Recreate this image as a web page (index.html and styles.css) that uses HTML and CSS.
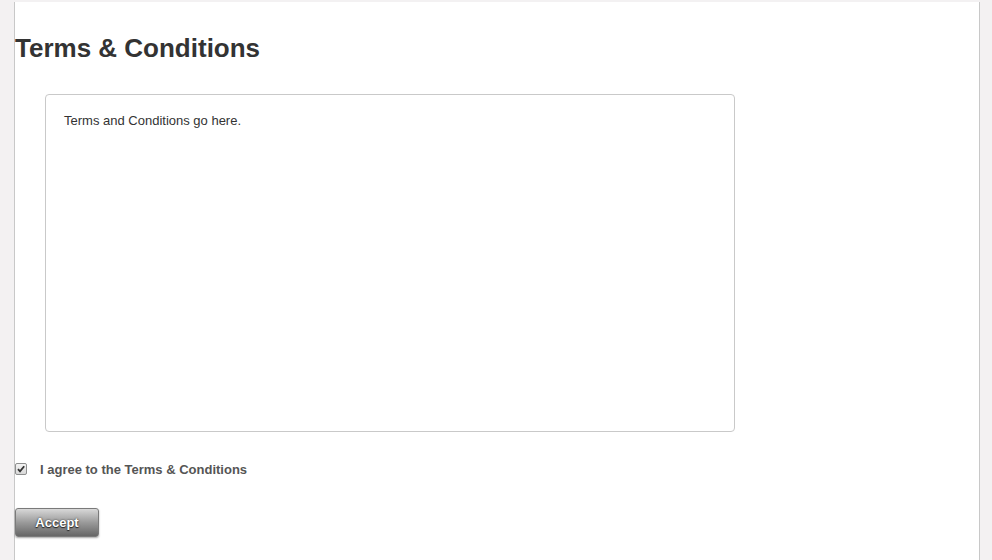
FILE: index.html
```html
<!DOCTYPE html>
<html>
<head>
<meta charset="utf-8">
<title>Terms &amp; Conditions</title>
<link rel="stylesheet" href="styles.css">
</head>
<body>
<div class="page">
  <h1 class="title">Terms &amp; Conditions</h1>
  <div class="terms-box">Terms and Conditions go here.</div>
  <label class="agree">
    <input type="checkbox" class="agree-check" checked>
    <span class="agree-text">I agree to the Terms &amp; Conditions</span>
  </label>
  <button class="accept-btn" type="button">Accept</button>
</div>
</body>
</html>
```

FILE: styles.css
```css
html, body {
  margin: 0;
  padding: 0;
  height: 100%;
}
body {
  background: #f3f1f2;
  font-family: "Liberation Sans", Arial, sans-serif;
  color: #333;
  padding-top: 2px;
  box-sizing: border-box;
  overflow: hidden;
}
.page {
  margin-left: 14px;
  width: 966px;
  height: 100%;
  background: #fff;
  border-left: 1px solid #c8c8c8;
  border-right: 1px solid #c8c8c8;
  padding-top: 31px;
  box-sizing: border-box;
}
.title {
  margin: 0;
  font-size: 26px;
  line-height: 30px;
  font-weight: bold;
  color: #333;
}
.terms-box {
  margin: 31px 0 0 30px;
  width: 670px;
  height: 318px;
  padding: 18px 0 0 18px;
  border: 1px solid #c9c9c9;
  border-radius: 4px;
  font-size: 13px;
  line-height: 16px;
  color: #333;
}
.agree {
  display: flex;
  align-items: center;
  margin-top: 29px;
  height: 16px;
}
.agree-check {
  -webkit-appearance: none;
  appearance: none;
  margin: 0;
  width: 12px;
  height: 12px;
  border: 1px solid #8e8f8f;
  border-radius: 2px;
  background-color: #e6e6e6;
  background-image: url("data:image/svg+xml;utf8,<svg xmlns='http://www.w3.org/2000/svg' width='10' height='10' viewBox='0 0 10 10'><path d='M2 5.2 L4 7.4 L8.2 2.2' fill='none' stroke='%23333' stroke-width='1.8'/></svg>"), linear-gradient(#f4f4f4, #d8d8d8);
  background-repeat: no-repeat;
  background-position: center, 0 0;
  box-sizing: border-box;
}
.agree-text {
  margin-left: 13px;
  font-size: 13px;
  font-weight: bold;
  color: #555;
}
.accept-btn {
  display: block;
  margin-top: 31px;
  width: 84px;
  height: 29px;
  padding: 0;
  border: 1px solid #7a7a7a;
  border-radius: 3px;
  background: linear-gradient(#d8d8d8, #9a9a9a 50%, #666);
  box-shadow: 0 1px 2px rgba(0,0,0,0.35);
  font-family: "Liberation Sans", Arial, sans-serif;
  font-size: 13px;
  font-weight: bold;
  color: #fff;
  text-shadow: 0 1px 1px #222, 0 0 2px #333;
}
```
